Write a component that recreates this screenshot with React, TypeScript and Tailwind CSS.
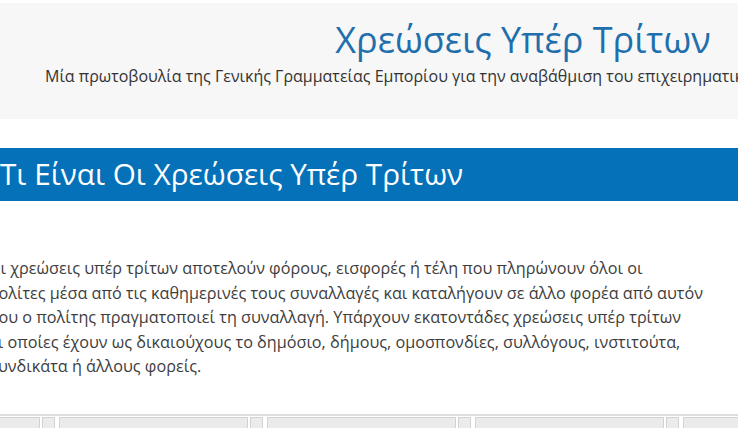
import React from "react";

const lines = [
  "Οι χρεώσεις υπέρ τρίτων αποτελούν φόρους, εισφορές ή τέλη που πληρώνουν όλοι οι",
  "πολίτες μέσα από τις καθημερινές τους συναλλαγές και καταλήγουν σε άλλο φορέα από αυτόν",
  "που ο πολίτης πραγματοποιεί τη συναλλαγή. Υπάρχουν εκατοντάδες χρεώσεις υπέρ τρίτων",
  "οι οποίες έχουν ως δικαιούχους το δημόσιο, δήμους, ομοσπονδίες, συλλόγους, ινστιτούτα,",
  "συνδικάτα ή άλλους φορείς.",
];

function Tab() {
  return (
    <div className="flex shrink-0 gap-[2px]">
      <div className="relative h-[14px] w-[189px] border border-[#d2d2d2] bg-[#ebebeb]">
        <span className="absolute left-[16px] top-[10px] h-[3px] w-[10px] bg-[#8a8a8a]" />
      </div>
      <div className="h-[14px] w-[13px] border border-[#d2d2d2] bg-[#ebebeb]" />
    </div>
  );
}

export default function App() {
  return (
    <div className="h-[428px] w-[738px] overflow-hidden bg-white" style={{ fontFamily: '"Open Sans", "Noto Sans", sans-serif' }}>
      <header className="mt-[3px] h-[116px] bg-[#f7f7f7] pt-[13px]">
        <div className="ml-[-77px] w-[1200px] text-center">
          <h1 className="text-[36px] font-normal leading-[48px] text-[#1f6fad]">Χρεώσεις Υπέρ Τρίτων</h1>
        </div>
        <p className="ml-[45px] mt-[2px] whitespace-nowrap text-[16px] leading-[20px] text-[#333]">
          Μία πρωτοβουλία της Γενικής Γραμματείας Εμπορίου για την αναβάθμιση του επιχειρηματικού περιβάλλοντος
        </p>
      </header>

      <h2 className="mt-[29px] flex h-[53px] items-center bg-[#0571b8] text-[29.7px] font-normal text-white">
        Τι Είναι Οι Χρεώσεις Υπέρ Τρίτων
      </h2>

      <div className="ml-[-12px] mt-[55px] text-[16.2px] leading-[24.5px] text-[#3d3d3d]">
        {lines.map((l) => (
          <div key={l} className="whitespace-nowrap">{l}</div>
        ))}
      </div>

      <div className="mt-[35px] border-t-[2px] border-[#dedede] pt-[1px]">
        <div className="ml-[-149px] flex gap-[4px]">
          <Tab />
          <Tab />
          <Tab />
          <Tab />
          <Tab />
        </div>
      </div>
    </div>
  );
}
